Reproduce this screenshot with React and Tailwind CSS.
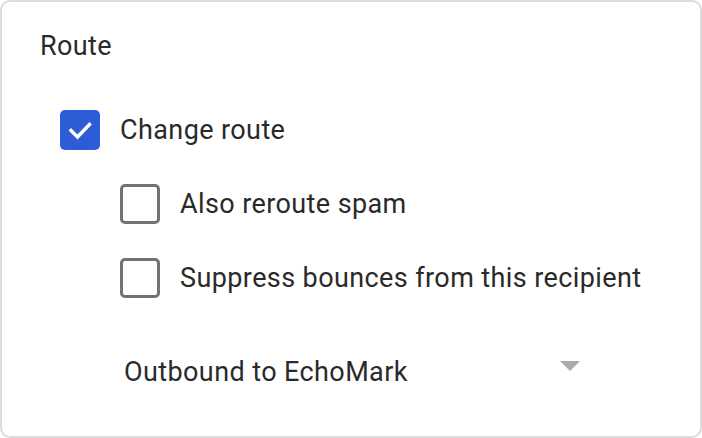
const Checkbox = ({ checked }) =>
  checked ? (
    <div className="w-10 h-10 rounded-[5px] bg-[#2e5bd6] flex items-center justify-center shrink-0">
      <svg width="28" height="28" viewBox="0 0 28 28" fill="none">
        <path d="M5 14.5 L11.5 21 L23.5 8.5" stroke="white" strokeWidth="3.4" strokeLinecap="square" />
      </svg>
    </div>
  ) : (
    <div className="w-10 h-10 rounded-[5px] border-[3.5px] border-[#727272] bg-white shrink-0" />
  );

const Option = ({ checked, label, indent }) => (
  <div className={`flex items-center h-10 gap-5 ${indent}`}>
    <Checkbox checked={checked} />
    <span className="text-[27px] leading-none tracking-[0.4px] text-[#2a2a2a]">{label}</span>
  </div>
);

export default function App() {
  return (
    <div
      className="w-[702px] h-[438px] bg-white"
      style={{ fontFamily: "Roboto, 'Liberation Sans', sans-serif" }}
    >
      <div className="w-full h-full border-2 border-[#dcdcdc] rounded-[10px] pl-[38px] pt-[28px] flex flex-col">
        <div className="h-8 flex items-center text-[27px] tracking-[0.4px] text-[#2a2a2a]">Route</div>

        <div className="mt-12 flex flex-col gap-[34px]">
          <Option checked label="Change route" indent="ml-5" />
          <Option label="Also reroute spam" indent="ml-20" />
          <Option label="Suppress bounces from this recipient" indent="ml-20" />
        </div>

        {/* Destination select */}
        <div className="mt-[54px] ml-[84px] w-[456px] h-10 flex items-center justify-between">
          <span className="text-[27px] leading-none tracking-[0.4px] text-[#2a2a2a]">Outbound to EchoMark</span>
          <svg width="20" height="10" viewBox="0 0 20 10" className="-mt-[13px]">
            <path d="M0 0 L20 0 L10 10 Z" fill="#ababab" />
          </svg>
        </div>
      </div>
    </div>
  );
}
